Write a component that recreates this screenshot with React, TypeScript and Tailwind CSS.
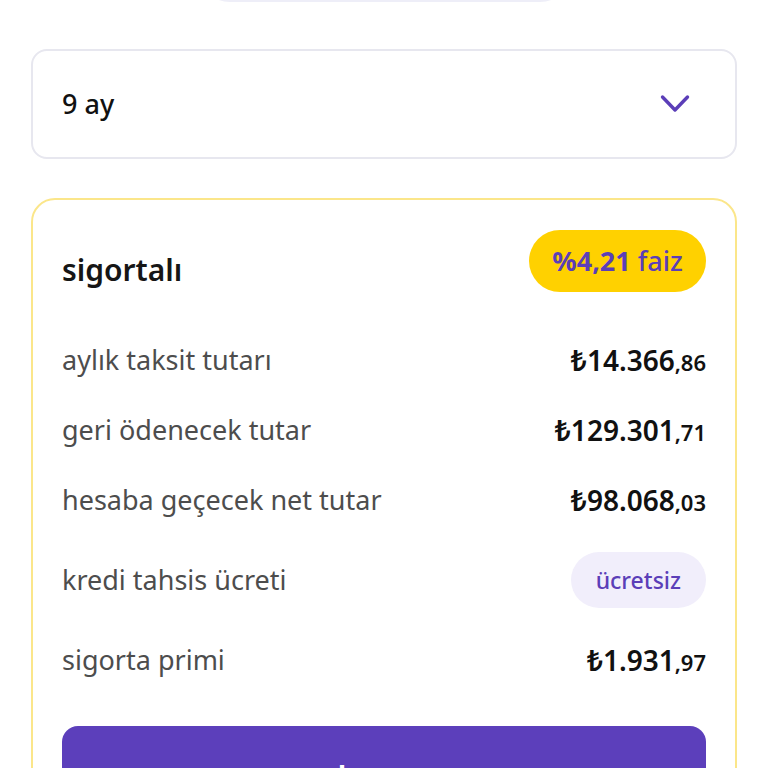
const rows = [
  { label: 'aylık taksit tutarı', main: '₺14.366', dec: ',86' },
  { label: 'geri ödenecek tutar', main: '₺129.301', dec: ',71' },
  { label: 'hesaba geçecek net tutar', main: '₺98.068', dec: ',03' },
];

function Amount({ main, dec }: { main: string; dec: string }) {
  return (
    <span className="text-[#111111] font-semibold">
      <span className="text-[28px]">{main}</span>
      <span className="text-[22px]">{dec}</span>
    </span>
  );
}

export default function App() {
  return (
    <div
      className="min-h-screen bg-white px-[31px] overflow-hidden"
      style={{ fontFamily: '"Noto Sans", "Open Sans", sans-serif' }}
    >
      {/* cut-off pill above */}
      <div className="-mt-[60px] mx-auto h-[62px] w-[372px] translate-x-[1px] rounded-full border-2 border-[#eeeef8]" />

      {/* term select */}
      <div className="mt-[47px] h-[110px] rounded-[16px] border-2 border-[#e7e7ef] flex items-center justify-between pl-[29px] pr-[45px]">
        <span className="text-[27px] text-[#111111] font-medium">9 ay</span>
        <svg width="30" height="20" viewBox="0 0 30 20" fill="none" className="text-[#5b3eb8]">
          <polyline points="2.5,3 15,16 27.5,3" stroke="currentColor" strokeWidth="3.4" strokeLinecap="round" strokeLinejoin="round" />
        </svg>
      </div>

      {/* offer card */}
      <div className="mt-[39px] rounded-[24px] border-2 border-[#fbe68a] px-[29px] pt-[30px] pb-[40px]">
        <div className="flex items-center justify-between h-[62px]">
          <span className="text-[30px] font-semibold text-[#161616] pt-[16px]">sigortalı</span>
          <span className="h-[62px] px-[23px] rounded-full bg-[#ffd100] text-[#5b3eb8] text-[27px] flex items-center">
            <span className="font-bold">%4,21</span>
            <span className="font-medium ml-[7px]">faiz</span>
          </span>
        </div>

        <div className="mt-[33px] flex flex-col">
          {rows.map((r) => (
            <div key={r.label} className="h-[70px] flex items-center justify-between">
              <span className="text-[27px] text-[#4d4d4d]">{r.label}</span>
              <Amount main={r.main} dec={r.dec} />
            </div>
          ))}
          <div className="h-[90px] flex items-center justify-between">
            <span className="text-[27px] text-[#4d4d4d]">kredi tahsis ücreti</span>
            <span className="h-[56px] px-[25px] rounded-full bg-[#f1eefb] text-[#5b3eb8] text-[23px] font-medium flex items-center">
              ücretsiz
            </span>
          </div>
          <div className="h-[70px] flex items-center justify-between">
            <span className="text-[27px] text-[#4d4d4d]">sigorta primi</span>
            <Amount main="₺1.931" dec=",97" />
          </div>
        </div>

        <button className="mt-[31px] w-full h-[100px] rounded-[16px] bg-[#5c3fbb] text-white text-[27px] font-bold">
          başvur
        </button>
      </div>
    </div>
  );
}
